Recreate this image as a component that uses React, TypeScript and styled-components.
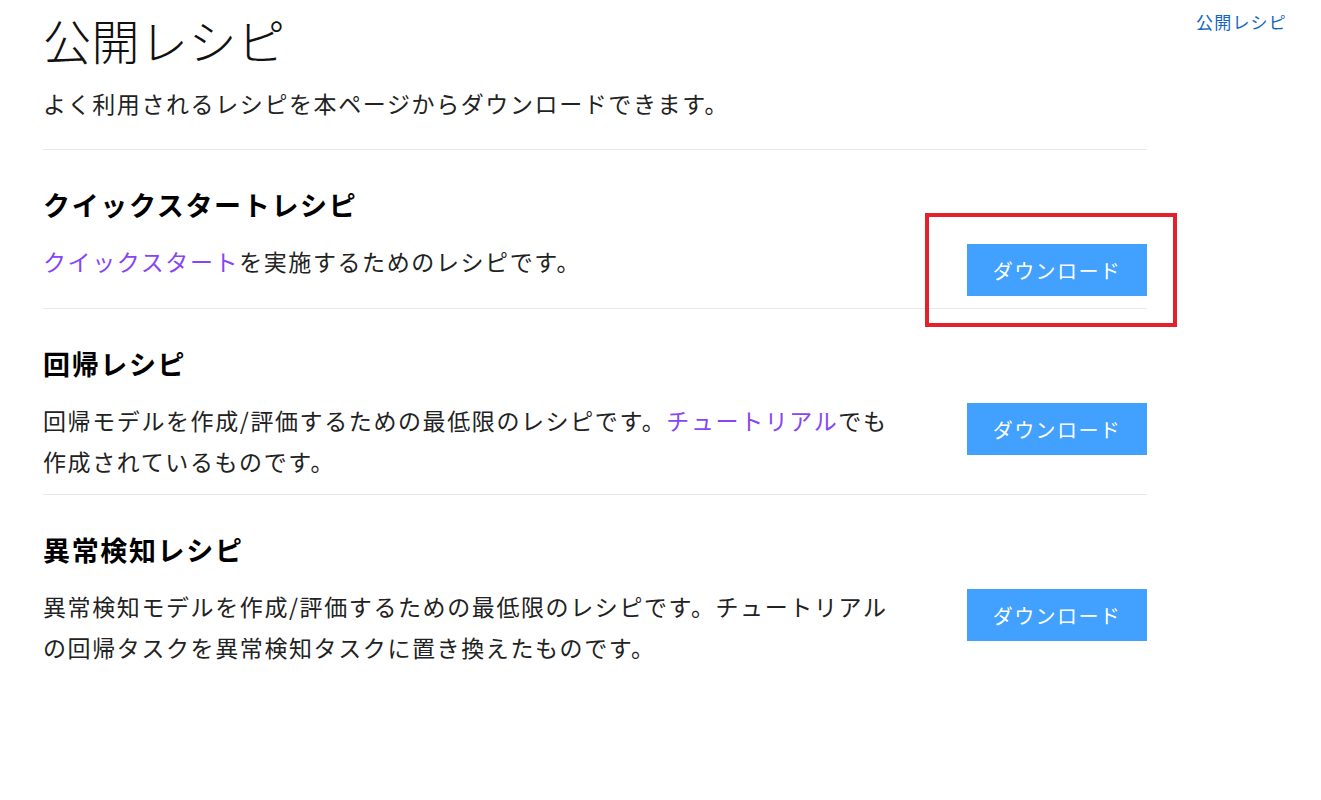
import React from "react";
import styled, { createGlobalStyle } from "styled-components";

const GlobalStyle = createGlobalStyle`
  html, body { margin: 0; padding: 0; background: #ffffff; }
  body {
    font-family: "Noto Sans CJK JP", "Noto Sans", sans-serif;
    color: #1f1f1f;
  }
`;

const Page = styled.div`
  display: flex;
  align-items: flex-start;
  padding-left: 43px;
  gap: 49px;
`;

const Main = styled.main`
  width: 1104px;
  padding-top: 10px;
`;

const Aside = styled.aside`
  padding-top: 10px;
`;

const TocLink = styled.a`
  font-size: 17px;
  letter-spacing: 1.2px;
  line-height: 24px;
  color: #1565c0;
  text-decoration: none;
`;

const Title = styled.h1`
  margin: 0;
  font-size: 48px;
  font-weight: 300;
  line-height: 58px;
  letter-spacing: 0.5px;
  color: #111;
`;

const Lead = styled.p`
  margin: 15px 0 0;
  padding-bottom: 25px;
  font-size: 23px;
  letter-spacing: 1.6px;
  line-height: 41px;
  color: #222;
  border-bottom: 1px solid #e6e8eb;
`;

const Section = styled.section`
  padding: 35px 0 12px;
  border-bottom: 1px solid #e6e8eb;
  &:last-child { border-bottom: none; }
`;

const Heading = styled.h2`
  margin: 0;
  font-size: 27px;
  font-weight: 700;
  letter-spacing: 1.65px;
  line-height: 40px;
  color: #000;
`;

const Row = styled.div`
  display: flex;
  align-items: flex-start;
  justify-content: space-between;
  margin-top: 16px;
`;

const Desc = styled.p`
  margin: 0;
  width: 852px;
  font-size: 23px;
  letter-spacing: 1.6px;
  line-height: 41px;
  color: #222;
`;

const Link = styled.a`
  color: #8646f4;
  text-decoration: none;
`;

const ButtonWrap = styled.div`
  position: relative;
  margin-top: 3px;
`;

const Button = styled.button`
  display: block;
  width: 180px;
  height: 52px;
  border: none;
  border-radius: 0;
  background: #42a0ff;
  color: #fff;
  font-family: inherit;
  font-size: 20px;
  letter-spacing: 1.4px;
  cursor: pointer;
`;

const Highlight = styled.div`
  position: absolute;
  left: -42px;
  top: -31px;
  right: -30px;
  bottom: -31px;
  border: 4px solid #e3202b;
  pointer-events: none;
`;

type Recipe = {
  title: string;
  body: React.ReactNode;
  highlighted?: boolean;
};

const recipes: Recipe[] = [
  {
    title: "クイックスタートレシピ",
    body: (
      <>
        <Link href="#">クイックスタート</Link>を実施するためのレシピです。
      </>
    ),
    highlighted: true,
  },
  {
    title: "回帰レシピ",
    body: (
      <>
        回帰モデルを作成/評価するための最低限のレシピです。
        <Link href="#">チュートリアル</Link>でも作成されているものです。
      </>
    ),
  },
  {
    title: "異常検知レシピ",
    body: (
      <>
        異常検知モデルを作成/評価するための最低限のレシピです。チュートリアルの回帰タスクを異常検知タスクに置き換えたものです。
      </>
    ),
  },
];

export default function App() {
  return (
    <>
      <GlobalStyle />
      <Page>
        <Main>
          <Title>公開レシピ</Title>
          <Lead>よく利用されるレシピを本ページからダウンロードできます。</Lead>
          {recipes.map((r) => (
            <Section key={r.title}>
              <Heading>{r.title}</Heading>
              <Row>
                <Desc>{r.body}</Desc>
                <ButtonWrap>
                  <Button>ダウンロード</Button>
                  {r.highlighted && <Highlight />}
                </ButtonWrap>
              </Row>
            </Section>
          ))}
        </Main>
        <Aside>
          <TocLink href="#">公開レシピ</TocLink>
        </Aside>
      </Page>
    </>
  );
}
